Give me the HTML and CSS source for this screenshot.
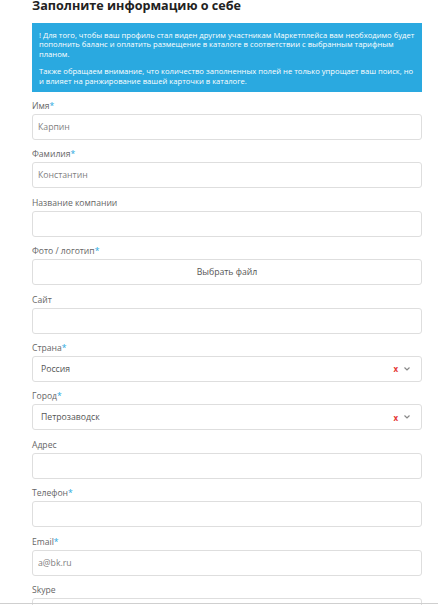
FILE: index.html
```html
<!DOCTYPE html>
<html lang="ru">
<head>
<meta charset="utf-8">
<title>Заполните информацию о себе</title>
<link rel="stylesheet" href="styles.css">
</head>
<body>
<div class="page">
  <h1 class="title">Заполните информацию о себе</h1>
  <div class="notice">
    <p>! Для того, чтобы ваш профиль стал виден другим участникам Маркетплейса вам необходимо будет пополнить баланс и оплатить размещение в каталоге в соответствии с выбранным тарифным планом.</p>
    <p>Также обращаем внимание, что количество заполненных полей не только упрощает ваш поиск, но и влияет на ранжирование вашей карточки в каталоге.</p>
  </div>
  <form class="form">
    <div class="field">
      <label class="label">Имя<span class="req">*</span></label>
      <input class="input" type="text" value="Карпин">
    </div>
    <div class="field">
      <label class="label">Фамилия<span class="req">*</span></label>
      <input class="input" type="text" value="Константин">
    </div>
    <div class="field">
      <label class="label">Название компании</label>
      <input class="input" type="text" value="">
    </div>
    <div class="field">
      <label class="label">Фото / логотип<span class="req">*</span></label>
      <div class="file">Выбрать файл</div>
    </div>
    <div class="field">
      <label class="label">Сайт</label>
      <input class="input" type="text" value="">
    </div>
    <div class="field">
      <label class="label">Страна<span class="req">*</span></label>
      <div class="select">
        <span class="select-value">Россия</span>
        <span class="select-clear">x</span>
        <svg class="select-arrow" width="6" height="4" viewBox="0 0 6 4"><path d="M0.5 0.5 L3 3 L5.5 0.5" fill="none" stroke="#888" stroke-width="1.2"/></svg>
      </div>
    </div>
    <div class="field">
      <label class="label">Город<span class="req">*</span></label>
      <div class="select">
        <span class="select-value">Петрозаводск</span>
        <span class="select-clear">x</span>
        <svg class="select-arrow" width="6" height="4" viewBox="0 0 6 4"><path d="M0.5 0.5 L3 3 L5.5 0.5" fill="none" stroke="#888" stroke-width="1.2"/></svg>
      </div>
    </div>
    <div class="field">
      <label class="label">Адрес</label>
      <input class="input" type="text" value="">
    </div>
    <div class="field">
      <label class="label">Телефон<span class="req">*</span></label>
      <input class="input" type="text" value="">
    </div>
    <div class="field">
      <label class="label">Email<span class="req">*</span></label>
      <input class="input" type="text" value="a@bk.ru">
    </div>
    <div class="field">
      <label class="label">Skype</label>
      <input class="input" type="text" value="">
    </div>
  </form>
</div>
<div class="edge"></div>
</body>
</html>
```
FILE: styles.css
```css
html, body {
  margin: 0;
  padding: 0;
  background: #fff;
}
body {
  font-family: "Open Sans", "Noto Sans", sans-serif;
  color: #555;
  overflow: hidden;
}
.page {
  width: 390px;
  padding: 0 16px 0 32px;
}
.title {
  margin: -2px 0 9px 0;
  font-size: 12.6px;
  line-height: 16px;
  font-weight: 700;
  color: #222;
}
.notice {
  background: #2aa9e0;
  color: #fff;
  padding: 8px 7px 6px 7px;
  font-size: 7.65px;
  line-height: 9.4px;
}
.notice p {
  margin: 0;
}
.notice p + p {
  margin-top: 8px;
}
.form {
  display: flex;
  flex-direction: column;
  gap: 9.4px;
  padding-top: 9px;
}
.field {
  display: flex;
  flex-direction: column;
  gap: 3px;
}
.label {
  font-size: 8.6px;
  line-height: 10px;
  color: #666;
}
.req {
  color: #2aa9e0;
}
.input, .file, .select {
  box-sizing: border-box;
  height: 26px;
  width: 100%;
  border: 1px solid #dedede;
  border-radius: 3px;
  background: #fff;
  font-family: inherit;
  font-size: 8.7px;
  color: #808080;
  margin: 0;
}
.input {
  padding: 0 5px;
  outline: none;
}
.file {
  display: flex;
  align-items: center;
  justify-content: center;
  color: #555;
}
.select {
  display: flex;
  align-items: center;
  padding: 0 11px 0 8px;
  color: #555;
}
.select-value {
  flex: 1;
}
.select-clear {
  color: #e53935;
  font-size: 8px;
  font-weight: 700;
  margin-right: 6px;
}
.select-arrow {
  display: block;
}
.edge {
  position: fixed;
  left: 0;
  right: 0;
  bottom: 1px;
  height: 1px;
  background: #cfcfcf;
}
```
